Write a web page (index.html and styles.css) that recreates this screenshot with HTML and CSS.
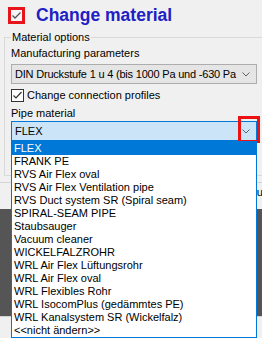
FILE: index.html
```html
<!DOCTYPE html>
<html lang="en">
<head>
  <meta charset="UTF-8" />
  <title>Change material</title>
  <link rel="stylesheet" href="styles.css">
</head>
<body>

  <header class="header">
    <span class="big-check">
      <svg width="11" height="11" viewBox="0 0 11 11"><polyline points="1.5,5.5 4,8 9.5,2.5" fill="none" stroke="#555" stroke-width="1.3"/></svg>
    </span>
    <h1 class="title">Change material</h1>
  </header>

  <fieldset class="group">
    <legend>Material options</legend>

    <div class="field-label">Manufacturing parameters</div>
    <div class="combo">
      <span class="combo-text tight">DIN Druckstufe 1 u 4 (bis 1000 Pa und -630 Pa</span>
      <svg class="chevron" width="8" height="5" viewBox="0 0 8 5"><polyline points="0.5,0.5 4,4 7.5,0.5" fill="none" stroke="#606060"/></svg>
    </div>

    <label class="check-row">
      <span class="check">
        <svg width="11" height="11" viewBox="0 0 11 11"><polyline points="1.5,5.5 4,8 9.5,2" fill="none" stroke="#333" stroke-width="1.2"/></svg>
      </span>
      Change connection profiles
    </label>

    <div class="field-label pipe-label">Pipe material</div>
    <div class="combo open">
      <span class="combo-text">FLEX</span>
      <svg class="chevron" width="8" height="5" viewBox="0 0 8 5"><polyline points="0.5,0.5 4,4 7.5,0.5" fill="none" stroke="#606060"/></svg>
      <span class="arrow-mark"></span>

      <ul class="dropdown">
        <li class="selected">FLEX</li>
        <li>FRANK PE</li>
        <li>RVS Air Flex oval</li>
        <li>RVS Air Flex Ventilation pipe</li>
        <li>RVS Duct system SR (Spiral seam)</li>
        <li>SPIRAL-SEAM PIPE</li>
        <li>Staubsauger</li>
        <li>Vacuum cleaner</li>
        <li>WICKELFALZROHR</li>
        <li>WRL Air Flex Lüftungsrohr</li>
        <li>WRL Air Flex oval</li>
        <li>WRL Flexibles Rohr</li>
        <li>WRL IsocomPlus (gedämmtes PE)</li>
        <li>WRL Kanalsystem SR (Wickelfalz)</li>
        <li>&lt;&lt;nicht ändern&gt;&gt;</li>
      </ul>
    </div>
  </fieldset>

  <div class="divider"></div>
  <div class="footer-row">Fun</div>
  <div class="preview"></div>
  <div class="bottom-bar"></div>

</body>
</html>
```

FILE: styles.css
```css
body {
  margin: 0;
  height: 338px;
  overflow: hidden;
  background: #f0f0f0;
  font-family: 'Liberation Sans', Arial, sans-serif;
  font-size: 11px;
  line-height: 13px;
  color: #000;
}

.header {
  display: flex;
  align-items: center;
  gap: 11px;
  padding: 7px 0 0 8px;
}

.big-check {
  display: flex;
  align-items: center;
  justify-content: center;
  width: 11px;
  height: 11px;
  border: 3px solid #e8141c;
  background: #f6f6f6;
}

.title {
  margin: 0;
  font-size: 17.5px;
  line-height: 17px;
  font-weight: bold;
  color: #2020c4;
}

.group {
  margin: 7px -20px 0 4px;
  padding: 0 6px 34px 6px;
  border: 1px solid #d9d9d9;
  min-width: 0;
}

.group legend {
  padding: 0 1px;
}

.field-label {
  margin-top: 3px;
}

.pipe-label {
  margin-top: 5px;
}

.combo {
  position: relative;
  display: flex;
  align-items: center;
  justify-content: space-between;
  box-sizing: border-box;
  width: 246px;
  height: 20px;
  margin-top: 4px;
  padding: 0 6px 0 3px;
  border: 1px solid #adadad;
  background: #e5e5e5;
}

.combo.open {
  margin-top: 1px;
  border-color: #0078d7;
  background: #cce4f7;
}

.combo-text {
  white-space: nowrap;
}

.combo-text.tight {
  letter-spacing: -0.2px;
}

.chevron {
  flex-shrink: 0;
}

.arrow-mark {
  position: absolute;
  right: -4px;
  top: -6px;
  width: 22px;
  height: 27px;
  box-sizing: border-box;
  border: 3px solid #ee1111;
}

.check-row {
  display: flex;
  align-items: center;
  gap: 3px;
  height: 13px;
  margin-top: 5px;
}

.check {
  display: flex;
  align-items: center;
  justify-content: center;
  box-sizing: border-box;
  width: 13px;
  height: 13px;
  border: 1px solid #333;
  background: #fff;
}

.dropdown {
  position: absolute;
  top: 19px;
  left: -1px;
  z-index: 2;
  box-sizing: border-box;
  width: 246px;
  margin: 0;
  padding: 0;
  list-style: none;
  background: #fff;
  border: 1px solid #0078d7;
}

.dropdown li {
  height: 13px;
  padding-left: 2px;
  white-space: nowrap;
}

.dropdown li.selected {
  background: #0078d7;
  color: #fff;
}

.divider {
  height: 1px;
  margin-top: 6px;
  background: #d5d5d5;
}

.footer-row {
  height: 26px;
  padding: 3px 0 0 250px;
  box-sizing: border-box;
  white-space: nowrap;
}

.preview {
  height: 107px;
  background: #555;
}

.bottom-bar {
  height: 30px;
  border-top: 1px solid #d0d0d0;
  background: #f0f0f0;
}
```
